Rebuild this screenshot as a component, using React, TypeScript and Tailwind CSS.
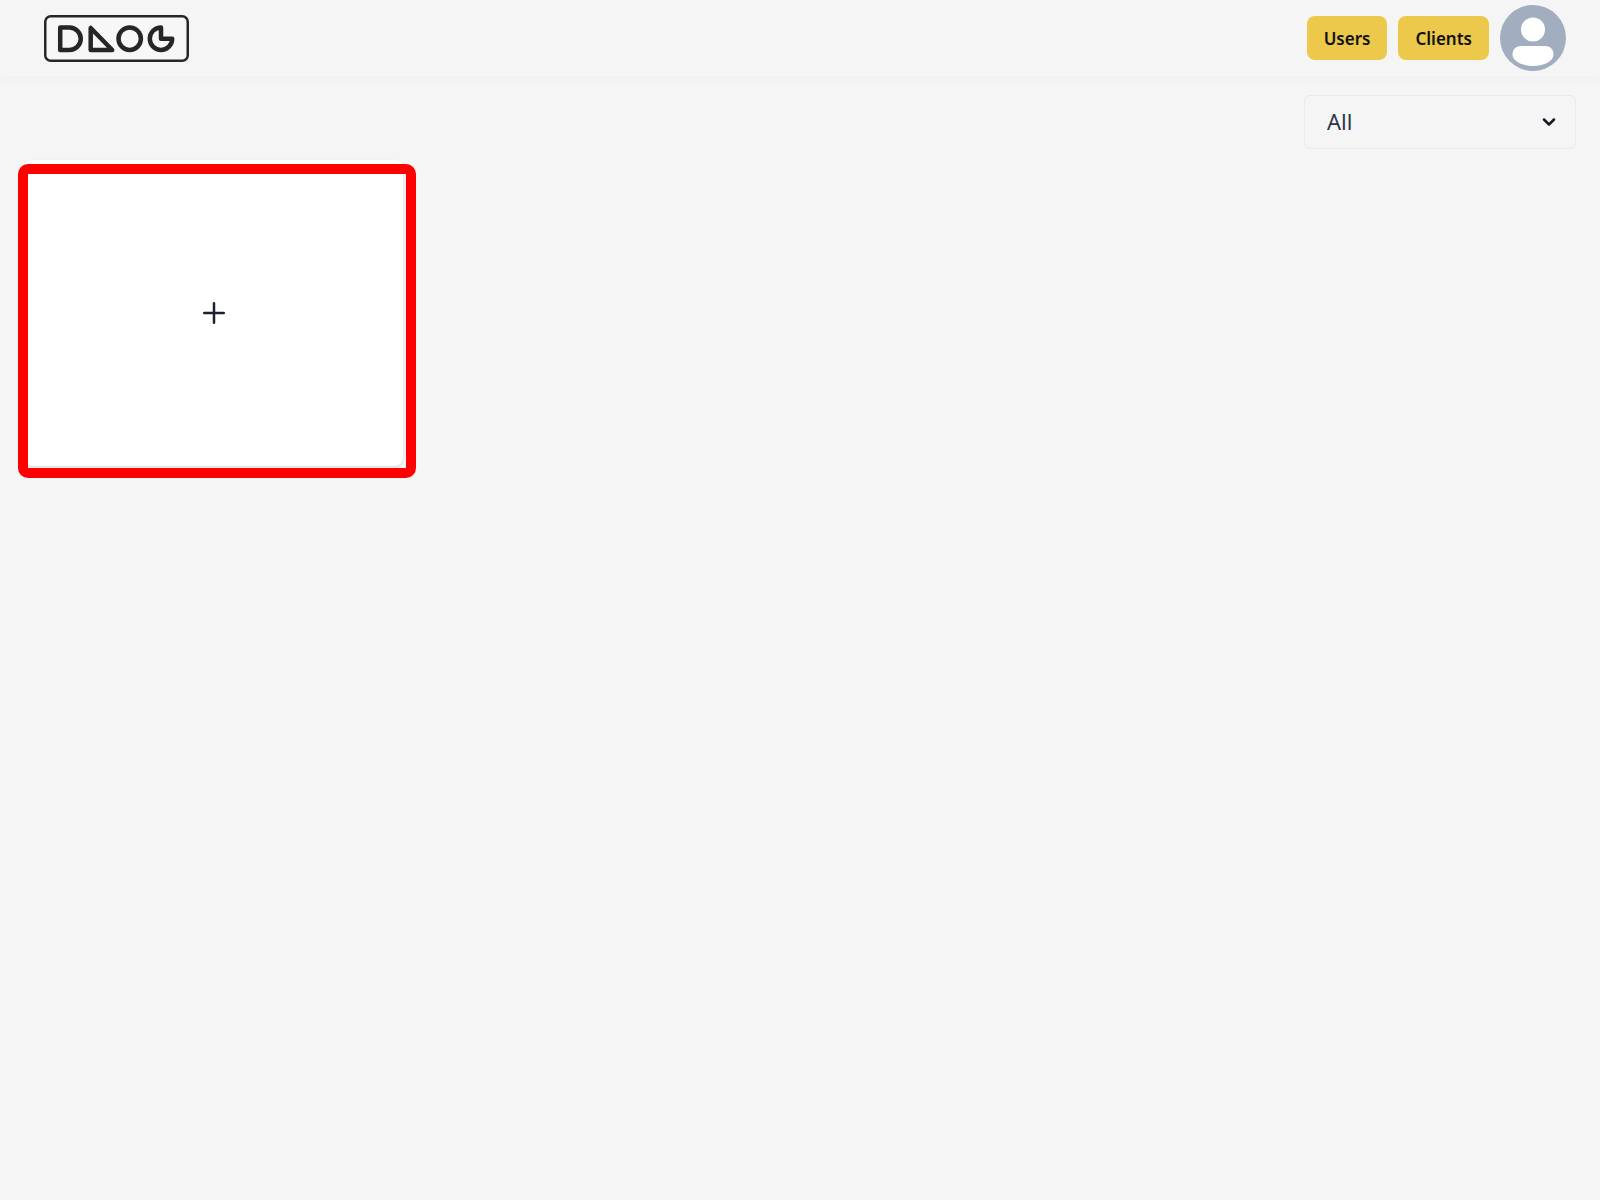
import { useState } from "react";

function Logo() {
  return (
    <svg
      viewBox="0 0 145 47"
      className="h-[47px] w-[145px]"
      fill="none"
      stroke="#262626"
      strokeLinejoin="round"
      role="img"
      aria-label="Logo"
    >
      <rect x="1.25" y="1.25" width="142.5" height="44.5" rx="5.5" fill="#f7f7f7" strokeWidth="2.5" />
      <g strokeWidth="4.5">
        <path d="M16.2 12.5h9.3a11.25 11.25 0 0 1 0 22.500h-9.300z" />
        <path d="M46.7 13v22h21.500z" />
        <circle cx="85.7" cy="23.7" r="11.2" />
        <path d="M117 12.5a11.2 11.2 0 1 0 11.200 11.200h-11.200z" />
      </g>
    </svg>
  );
}

function Avatar() {
  return (
    <svg viewBox="0 0 66 66" className="size-[66px]" aria-hidden="true">
      <circle cx="33" cy="33" r="33" fill="#a0aec0" />
      <circle cx="33" cy="24.5" r="12" fill="#fff" />
      <path d="M21.5 41h23c5.500 0 9 3 9 8.500 0 7-10.500 11.500-20.500 11.500s-20.500-4.500-20.500-11.500c0-5.500 3.500-8.500 9-8.500z" fill="#fff" />
    </svg>
  );
}

function NavButton({ label }: { label: string }) {
  return (
    <button
      type="button"
      className="h-11 rounded-lg bg-[#ecc94b] px-[17px] pt-0.5 text-[17px] font-semibold text-[#111111] hover:bg-[#d69e2e]"
    >
      {label}
    </button>
  );
}

export default function App() {
  const [filter, setFilter] = useState("all");

  return (
    <div className="min-h-screen bg-[#f5f5f5] font-['Noto_Sans',sans-serif]">
      <header className="flex h-[76px] items-center justify-between pr-[34px] pl-11 shadow-[0_7px_4px_0_rgba(0,0,0,0.012)]">
        <a href="#">
          <Logo />
        </a>
        <nav className="flex items-center gap-[11px]">
          <NavButton label="Users" />
          <NavButton label="Clients" />
          <button type="button" aria-label="Account" className="rounded-full">
            <Avatar />
          </button>
        </nav>
      </header>

      <main className="px-6 pt-[19px]">
        <div className="flex justify-end">
          <div className="relative w-[272px]">
            <select
              aria-label="Filter"
              value={filter}
              onChange={(e) => setFilter(e.target.value)}
              className="h-[54px] w-full appearance-none rounded-md border border-[#e6ebef] bg-transparent px-[22px] pb-0.5 text-[22px] text-[#2d3748] focus:outline-none"
            >
              <option value="all">All</option>
            </select>
            <svg
              viewBox="0 0 14 9"
              className="pointer-events-none absolute top-[23px] right-5 h-[9px] w-[14px]"
              fill="none"
              stroke="#171923"
              strokeWidth="2.5"
              strokeLinecap="round"
              strokeLinejoin="round"
            >
              <path d="M2 1.5l5 5 5-5" />
            </svg>
          </div>
        </div>

        <div className="mt-[11px] grid grid-cols-[repeat(auto-fill,379px)] gap-6">
          <div className="relative">
            <button
              type="button"
              aria-label="Add"
              className="flex h-[306px] w-full items-center justify-center rounded-lg bg-white shadow-sm"
            >
              <svg viewBox="0 0 22 22" className="size-[22px]" stroke="#1a202c" strokeWidth="2.5" strokeLinecap="round">
                <path d="M11 1.25v19.500M1.250 11h19.500" />
              </svg>
            </button>
            {/* highlight frame around the add tile */}
            <div className="pointer-events-none absolute top-1 -right-[13px] -bottom-3 -left-1.5 rounded-[10px] border-10 border-[#ff0000]" />
          </div>
        </div>
      </main>
    </div>
  );
}
